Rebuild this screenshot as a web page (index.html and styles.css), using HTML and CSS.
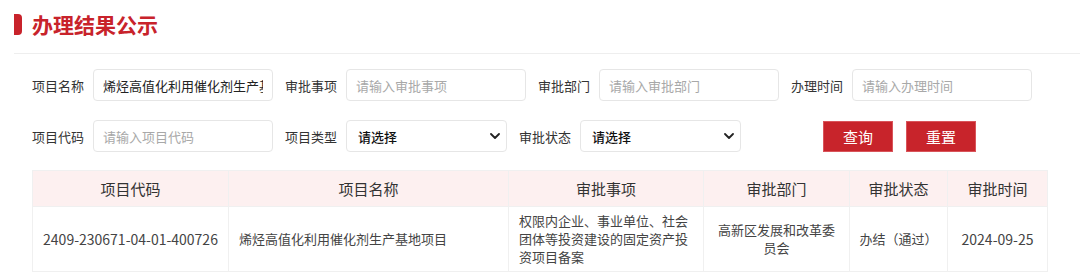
FILE: index.html
```html
<!DOCTYPE html>
<html lang="zh-CN">
<head>
    <meta charset="UTF-8">
    <title>办理结果公示</title>
    <link rel="stylesheet" href="styles.css">
</head>
<body>
    <div class="page">
        <div class="title-bar">
            <span class="title-mark"></span>
            <h2>办理结果公示</h2>
        </div>

        <div class="search-form">
            <div class="form-row">
                <label class="field">
                    <span class="field-label">项目名称</span>
                    <input class="text-input" type="text" value="烯烃高值化利用催化剂生产基地项目">
                </label>
                <label class="field">
                    <span class="field-label">审批事项</span>
                    <input class="text-input" type="text" placeholder="请输入审批事项">
                </label>
                <label class="field">
                    <span class="field-label">审批部门</span>
                    <input class="text-input" type="text" placeholder="请输入审批部门">
                </label>
                <label class="field">
                    <span class="field-label">办理时间</span>
                    <input class="text-input" type="text" placeholder="请输入办理时间">
                </label>
            </div>
            <div class="form-row">
                <label class="field">
                    <span class="field-label">项目代码</span>
                    <input class="text-input" type="text" placeholder="请输入项目代码">
                </label>
                <label class="field">
                    <span class="field-label">项目类型</span>
                    <span class="select-wrap">
                        <select class="select-input">
                            <option>请选择</option>
                        </select>
                        <svg class="select-arrow" width="10" height="6" viewBox="0 0 10 6"><path d="M1 1l4 4 4-4" fill="none" stroke="#222" stroke-width="1.8" stroke-linecap="round" stroke-linejoin="round"/></svg>
                    </span>
                </label>
                <label class="field">
                    <span class="field-label">审批状态</span>
                    <span class="select-wrap">
                        <select class="select-input">
                            <option>请选择</option>
                        </select>
                        <svg class="select-arrow" width="10" height="6" viewBox="0 0 10 6"><path d="M1 1l4 4 4-4" fill="none" stroke="#222" stroke-width="1.8" stroke-linecap="round" stroke-linejoin="round"/></svg>
                    </span>
                </label>
                <div class="form-buttons">
                    <button class="btn">查询</button>
                    <button class="btn">重置</button>
                </div>
            </div>
        </div>

        <table class="result-table">
            <colgroup>
                <col style="width: 196px">
                <col style="width: 280px">
                <col style="width: 195px">
                <col style="width: 146px">
                <col style="width: 98px">
                <col style="width: 100px">
            </colgroup>
            <thead>
                <tr>
                    <th>项目代码</th>
                    <th>项目名称</th>
                    <th>审批事项</th>
                    <th>审批部门</th>
                    <th>审批状态</th>
                    <th>审批时间</th>
                </tr>
            </thead>
            <tbody>
                <tr>
                    <td class="num">2409-230671-04-01-400726</td>
                    <td class="left">烯烃高值化利用催化剂生产基地项目</td>
                    <td class="left">权限内企业、事业单位、社会团体等投资建设的固定资产投资项目备案</td>
                    <td>高新区发展和改革委员会</td>
                    <td>办结（通过）</td>
                    <td class="num">2024-09-25</td>
                </tr>
            </tbody>
        </table>
    </div>
</body>
</html>
```

FILE: styles.css
```css
* {
    margin: 0;
    padding: 0;
    box-sizing: border-box;
}

body {
    font-family: "Noto Sans CJK SC", "Liberation Sans", sans-serif;
    font-size: 13px;
    color: #333;
    background: #fff;
}

.page {
    padding: 14px 0 0 14px;
}

.title-bar {
    display: flex;
    align-items: center;
    gap: 10px;
    height: 21px;
}

.title-mark {
    width: 8px;
    height: 21px;
    background: #c8232b;
    border-radius: 0 4px 4px 0;
}

.title-bar h2 {
    font-size: 21px;
    font-weight: bold;
    color: #c8232b;
    line-height: 21px;
}

.search-form {
    margin-top: 18px;
    border-top: 1.5px solid #eee;
    padding: 15px 0 0 18px;
    display: flex;
    flex-direction: column;
    gap: 19px;
}

.form-row {
    display: flex;
    align-items: center;
    gap: 12px;
}

.field {
    display: flex;
    align-items: center;
    gap: 5px;
}

.field-label {
    width: 56px;
    white-space: nowrap;
    color: #333;
}

.text-input {
    width: 180px;
    height: 32px;
    border: 1px solid #e6e6e6;
    border-radius: 4px;
    padding: 0 9px;
    font-family: inherit;
    font-size: 13px;
    color: #222;
    outline: none;
}

.text-input::placeholder {
    color: #a8a8a8;
}

.select-wrap {
    position: relative;
    display: block;
}

.select-input {
    appearance: none;
    width: 161px;
    height: 32px;
    border: 1px solid #e6e6e6;
    border-radius: 4px;
    padding: 0 11px;
    font-family: inherit;
    font-size: 13px;
    font-weight: 500;
    color: #111;
    background: #fff;
    outline: none;
}

.select-arrow {
    position: absolute;
    right: 7px;
    top: 13px;
}

.form-buttons {
    display: flex;
    gap: 13px;
    margin-left: 70px;
}

.btn {
    width: 70px;
    height: 31px;
    border: 1px solid #d9545a;
    background: #c8242b;
    color: #fff;
    font-family: inherit;
    font-size: 15px;
    cursor: pointer;
}

.result-table {
    margin: 18px 0 0 18px;
    width: 1015px;
    border-collapse: collapse;
    table-layout: fixed;
}

.result-table th,
.result-table td {
    border: 1px solid #f0f0f0;
    text-align: center;
    padding: 0 8px;
}

.result-table th {
    height: 36px;
    background: #fdf0f0;
    font-weight: normal;
    color: #333;
    font-size: 15px;
}

.result-table td {
    height: 65px;
    color: #444;
    line-height: 18px;
}

.result-table td.left {
    text-align: left;
    padding: 0 4px 0 10px;
}

.result-table td.num {
    font-size: 14px;
}
```
